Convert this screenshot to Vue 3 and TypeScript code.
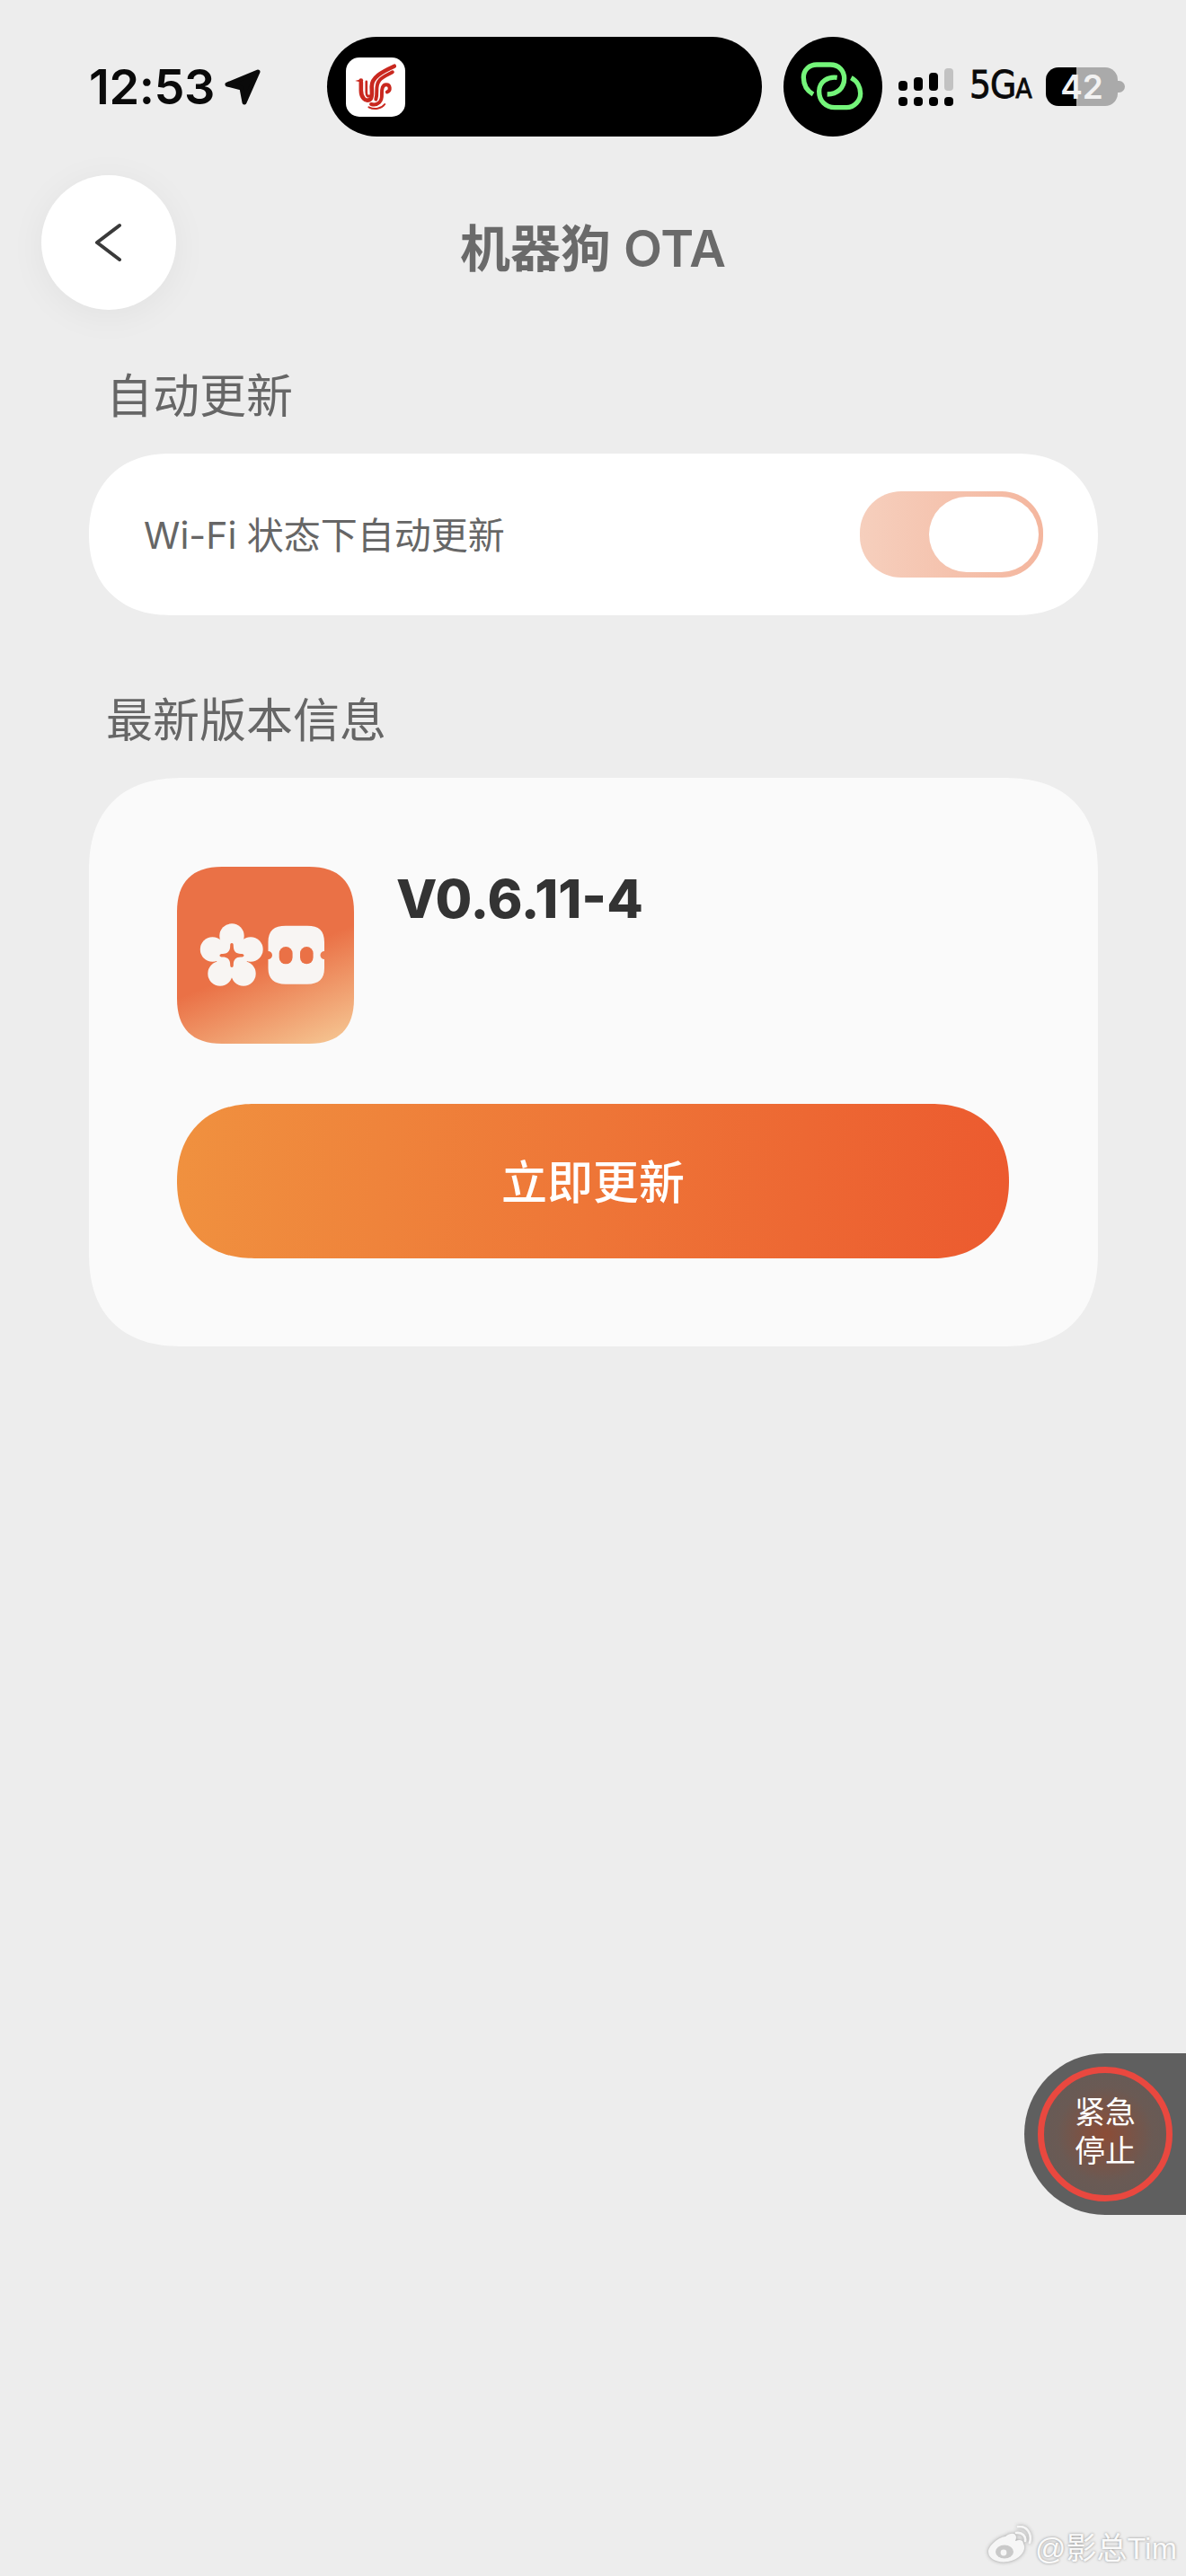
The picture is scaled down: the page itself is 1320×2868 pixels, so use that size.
<script setup lang="ts">
interface SignalBar {
  height: number
  off?: boolean
}

const signalBars: SignalBar[] = [
  { height: 11 },
  { height: 15 },
  { height: 20 },
  { height: 25, off: true },
]

const petals = [
  { cx: 61, cy: 77 },
  { cx: 39.5, cy: 92 },
  { cx: 82, cy: 92 },
  { cx: 48, cy: 119 },
  { cx: 74, cy: 119 },
]
</script>

<template>
  <div class="page">
    <div class="status-bar">
      <span class="time">12:53</span>
      <svg class="location" viewBox="0 0 40 40">
        <path d="M37 3 L3 17 L19 21 L22 37 Z" fill="#0a0a0a" stroke="#0a0a0a" stroke-width="5" stroke-linejoin="round" />
      </svg>
      <div class="island">
        <div class="app-tile">
          <svg viewBox="15 18 200 197">
            <g fill="none" stroke="#c9281f" stroke-linecap="round">
              <path d="M66 100 V128 C66 150 80 168 97 158 C106 152 102 130 102 114 C102 84 134 66 178 46" stroke-width="14" />
              <path d="M84 98 V134 C84 146 90 150 94 146" stroke-width="8" />
              <path d="M116 158 C124 132 112 112 128 94 C138 82 154 76 172 66" stroke-width="12" />
              <path d="M100 174 C124 180 137 164 136 142 C135 122 139 108 151 108 C165 108 167 128 154 133" stroke-width="12" />
              <path d="M92 184 C112 194 134 190 146 174" stroke-width="6" />
            </g>
            <circle cx="66" cy="94" r="7" fill="#c9281f" />
            <path d="M46 95 L62 91 L62 99 Z" fill="#c9281f" />
          </svg>
        </div>
      </div>
      <div class="link-badge">
        <svg viewBox="0 0 288 288">
          <g fill="none" stroke="#74f57a" stroke-width="16">
            <path d="M78 168 C55 155 46 132 46 112 C46 86 66 69 90 69 H135 C165 69 182 90 182 115 C182 146 160 168 125 168" />
            <path d="M158 112 C128 108 98 125 98 158 C98 190 120 212 150 212 H190 C215 212 236 190 236 165 C236 145 226 124 205 113" />
          </g>
        </svg>
      </div>
      <div class="signal">
        <div v-for="(bar, i) in signalBars" :key="i" class="signal-col" :class="{ off: bar.off }">
          <span class="signal-bar" :style="{ height: bar.height + 'px' }"></span>
          <span class="signal-dot"></span>
        </div>
      </div>
      <span class="network">5G<small>A</small></span>
      <div class="battery">
        <div class="battery-body">42</div>
        <span class="battery-nub"></span>
      </div>
    </div>

    <header class="nav">
      <button class="back">
        <svg viewBox="0 0 32 44">
          <path d="M28 3 L3 22 L28 41" fill="none" stroke="#3a3a3a" stroke-width="4" stroke-linecap="round" stroke-linejoin="round" />
        </svg>
      </button>
      <h1 class="title">机器狗 OTA</h1>
    </header>

    <main class="content">
      <h2 class="section-title">自动更新</h2>
      <section class="auto-card">
        <span class="auto-label">Wi-Fi 状态下自动更新</span>
        <div class="toggle"><span class="knob"></span></div>
      </section>

      <h2 class="section-title second">最新版本信息</h2>
      <section class="version-card">
        <div class="version-row">
          <svg class="app-logo" viewBox="0 0 197 197">
            <defs>
              <linearGradient id="logoFill" gradientUnits="userSpaceOnUse" x1="98" y1="106" x2="145" y2="218">
                <stop offset="0" stop-color="#ea7146" />
                <stop offset="1" stop-color="#f6ca96" />
              </linearGradient>
            </defs>
            <path d="M50 0 H147 C180 0 197 17 197 50 V147 C197 180 180 197 147 197 H50 C17 197 0 180 0 147 V50 C0 17 17 0 50 0 Z" fill="url(#logoFill)" />
            <g fill="#f8f5f3">
              <circle v-for="(p, i) in petals" :key="i" :cx="p.cx" :cy="p.cy" r="13.7" />
              <circle cx="61" cy="99" r="18" />
              <path d="M101.5 84 C101.5 71 108 65.7 121 65.7 H145 C158 65.7 164 71 164 84 V94 A4.5 4.5 0 0 0 164 103 V113 C164 125 158 130.7 145 130.7 H121 C108 130.7 101.5 125 101.5 113 V103 A4.5 4.5 0 0 0 101.5 94 Z" />
            </g>
            <g fill="#ea7146">
              <path d="M61 85 C62.5 85 62.8 86 62.8 88 C62.8 94 65.5 96.9 71 96.9 C73.5 96.9 74.5 97.5 74.5 98.7 C74.5 99.9 73.5 100.5 71 100.5 C65.5 100.5 62.8 103.5 62.8 109 C62.8 111 62.5 112 61 112 C59.5 112 59.2 111 59.2 109 C59.2 103.5 56.5 100.5 51 100.5 C48.5 100.5 47.5 99.9 47.5 98.7 C47.5 97.5 48.5 96.9 51 96.9 C56.5 96.9 59.2 94 59.2 88 C59.2 86 59.5 85 61 85 Z" />
              <rect x="113.7" y="89" width="14.9" height="19.3" rx="7.4" />
              <rect x="137" y="89" width="14.6" height="19.3" rx="7.3" />
            </g>
          </svg>
          <span class="version">V0.6.11-4</span>
        </div>
        <button class="update-btn"><span>立即更新</span></button>
      </section>
    </main>

    <div class="estop">
      <div class="estop-ring"><span>紧急<br />停止</span></div>
    </div>

    <div class="watermark">
      <svg viewBox="0 0 50 46">
        <path d="M21 12 C27 7 33 8 33 13 C33 15 32 17 32 17 C37 15 41 16 41 20 C44 24 42 36 24 40 C12 42 2 37 2 29 C2 23 12 13 21 12 Z" fill="#f6f6f6" />
        <ellipse cx="20" cy="29" rx="10" ry="7.5" fill="#c9c9c9" />
        <circle cx="19" cy="30" r="3.4" fill="#f6f6f6" />
        <path d="M33 8 C40 7 44 12 43 17 M35 1 C45 0 51 9 48 19" fill="none" stroke="#f6f6f6" stroke-width="2.6" stroke-linecap="round" />
      </svg>
      <span>@影总Tim</span>
    </div>
  </div>
</template>

<style scoped>
.page {
  position: relative;
  width: 1320px;
  height: 2868px;
  overflow: hidden;
  background: #ededed;
  font-family: Inter, "Noto Sans CJK SC", sans-serif;
  color: #666;
}

.status-bar {
  display: flex;
  align-items: center;
  height: 111px;
  padding: 41px 0 0 99px;
}

.time {
  width: 137px;
  font-size: 54px;
  font-weight: 600;
  letter-spacing: -0.4px;
  color: #0a0a0a;
  white-space: nowrap;
}

.location {
  width: 40px;
  height: 40px;
  margin: 0 0 0 14px;
}

.island {
  display: flex;
  align-items: center;
  width: 484px;
  height: 111px;
  margin-left: 74px;
  padding-left: 21px;
  box-sizing: border-box;
  background: #000;
  border-radius: 56px;
}

.app-tile {
  width: 66px;
  height: 66px;
  background: #fff;
  border-radius: 15px;
}

.app-tile svg {
  display: block;
  width: 66px;
  height: 66px;
}

.link-badge {
  display: flex;
  align-items: center;
  justify-content: center;
  width: 110px;
  height: 111px;
  margin-left: 24px;
  background: #000;
  border-radius: 50%;
}

.link-badge svg {
  width: 96px;
  height: 96px;
}

.signal {
  display: flex;
  gap: 7px;
  margin-left: 18px;
  height: 42px;
  align-items: flex-end;
}

.signal-col {
  display: flex;
  flex-direction: column;
  gap: 7px;
  width: 10px;
  margin-top: 0;
}

.signal-bar,
.signal-dot {
  display: block;
  background: #000;
  border-radius: 4px;
}

.signal-dot {
  height: 10px;
}

.signal-col.off .signal-bar {
  background: #c2c2c2;
}

.network {
  width: 68px;
  margin-left: 18px;
  font-family: "Liberation Sans Narrow", "DejaVu Sans Condensed", sans-serif;
  font-size: 42px;
  line-height: 42px;
  letter-spacing: -1px;
  color: #0a0a0a;
  -webkit-text-stroke: 0.8px #0a0a0a;
  white-space: nowrap;
}

.network small {
  font-size: 30px;
}

.battery {
  display: flex;
  align-items: center;
  margin-left: 17px;
}

.battery-body {
  width: 80px;
  height: 43px;
  border-radius: 14px;
  background: linear-gradient(90deg, #000 0 34px, #aaa 34px);
  color: #f2f2f2;
  font-size: 37px;
  font-weight: 600;
  line-height: 43px;
  text-align: center;
}

.battery-nub {
  width: 8px;
  height: 13px;
  background: #aaa;
  border-radius: 0 7px 7px 0;
}

.nav {
  position: relative;
  display: flex;
  align-items: center;
  justify-content: center;
  height: 150px;
  margin-top: 43px;
}

.back {
  position: absolute;
  left: 46px;
  top: 0;
  display: flex;
  align-items: center;
  justify-content: center;
  width: 150px;
  height: 150px;
  padding: 0;
  border: 0;
  border-radius: 50%;
  background: #fff;
  box-shadow: 0 6px 40px rgba(0, 0, 0, 0.05);
}

.back svg {
  width: 32px;
  height: 44px;
}

.title {
  margin: 14px 0 0;
  font-size: 56px;
  font-weight: 600;
  line-height: 70px;
  color: #6a6a6a;
}

.content {
  padding: 0 98px 0 99px;
}

.section-title {
  margin: 67px 0 33px;
  padding-left: 19px;
  font-size: 52px;
  font-weight: 400;
  line-height: 60px;
  color: #666;
}

.section-title.second {
  margin-top: 88px;
}

.auto-card {
  display: flex;
  align-items: center;
  justify-content: space-between;
  height: 180px;
  padding: 0 61px;
  background: #fff;
  border-radius: 84px;
}

.auto-label {
  margin-top: -4px;
  font-size: 41px;
  color: #666;
}

.toggle {
  display: flex;
  align-items: center;
  justify-content: flex-end;
  width: 204px;
  height: 96px;
  padding-right: 5px;
  box-sizing: border-box;
  background: linear-gradient(90deg, #f6cfbd, #f4b69e);
  border-radius: 46px;
}

.knob {
  width: 122px;
  height: 84px;
  background: #fff;
  border-radius: 42px;
}

.version-card {
  padding: 99px 99px 98px 98px;
  background: #fafafa;
  border-radius: 84px;
}

.version-row {
  display: flex;
  align-items: flex-start;
  gap: 47px;
}

.app-logo {
  display: block;
  width: 197px;
  height: 197px;
  flex-shrink: 0;
}

.version {
  margin-top: 1px;
  font-size: 59px;
  font-weight: 800;
  line-height: 70px;
  color: #333;
}

.update-btn {
  display: block;
  width: 100%;
  height: 172px;
  margin-top: 67px;
  padding: 0 0 4px;
  border: 0;
  border-radius: 82px;
  background: linear-gradient(94deg, #f0913f, #ec5a2f);
  color: #fff;
  font-family: inherit;
  font-size: 51px;
  font-weight: 500;
}

.estop {
  position: absolute;
  right: 0;
  top: 2286px;
  display: flex;
  align-items: center;
  width: 180px;
  height: 180px;
  padding-left: 15px;
  box-sizing: border-box;
  background: #5f5f5f;
  border-radius: 90px 0 0 90px;
}

.estop-ring {
  display: flex;
  align-items: center;
  justify-content: center;
  width: 150px;
  height: 150px;
  padding-bottom: 6px;
  box-sizing: border-box;
  border: 7px solid #e9483f;
  border-radius: 50%;
  background: radial-gradient(circle, #8c4c36 0, #6a5a54 55%, #635b58 100%);
  color: #fff;
  font-size: 34px;
  line-height: 43px;
  text-align: center;
}

.watermark {
  position: absolute;
  right: 10px;
  top: 2810px;
  display: flex;
  align-items: center;
  gap: 4px;
  color: #fafafa;
  font-family: "Liberation Sans", "Noto Sans CJK SC", sans-serif;
  font-size: 34px;
  text-shadow: 0 0 3px #8a8a8a;
}

.watermark svg {
  width: 50px;
  height: 46px;
  filter: drop-shadow(0 0 2px #999);
}

@supports (corner-shape: squircle) {
  .auto-card {
    border-radius: 90px;
    corner-shape: superellipse(1.15);
  }

  .version-card {
    border-radius: 105px;
    corner-shape: superellipse(1.25);
  }

  .update-btn {
    border-radius: 86px;
    corner-shape: superellipse(1.15);
  }
}
</style>

<style>
html,
body {
  margin: 0;
  background: #ededed;
}
</style>
